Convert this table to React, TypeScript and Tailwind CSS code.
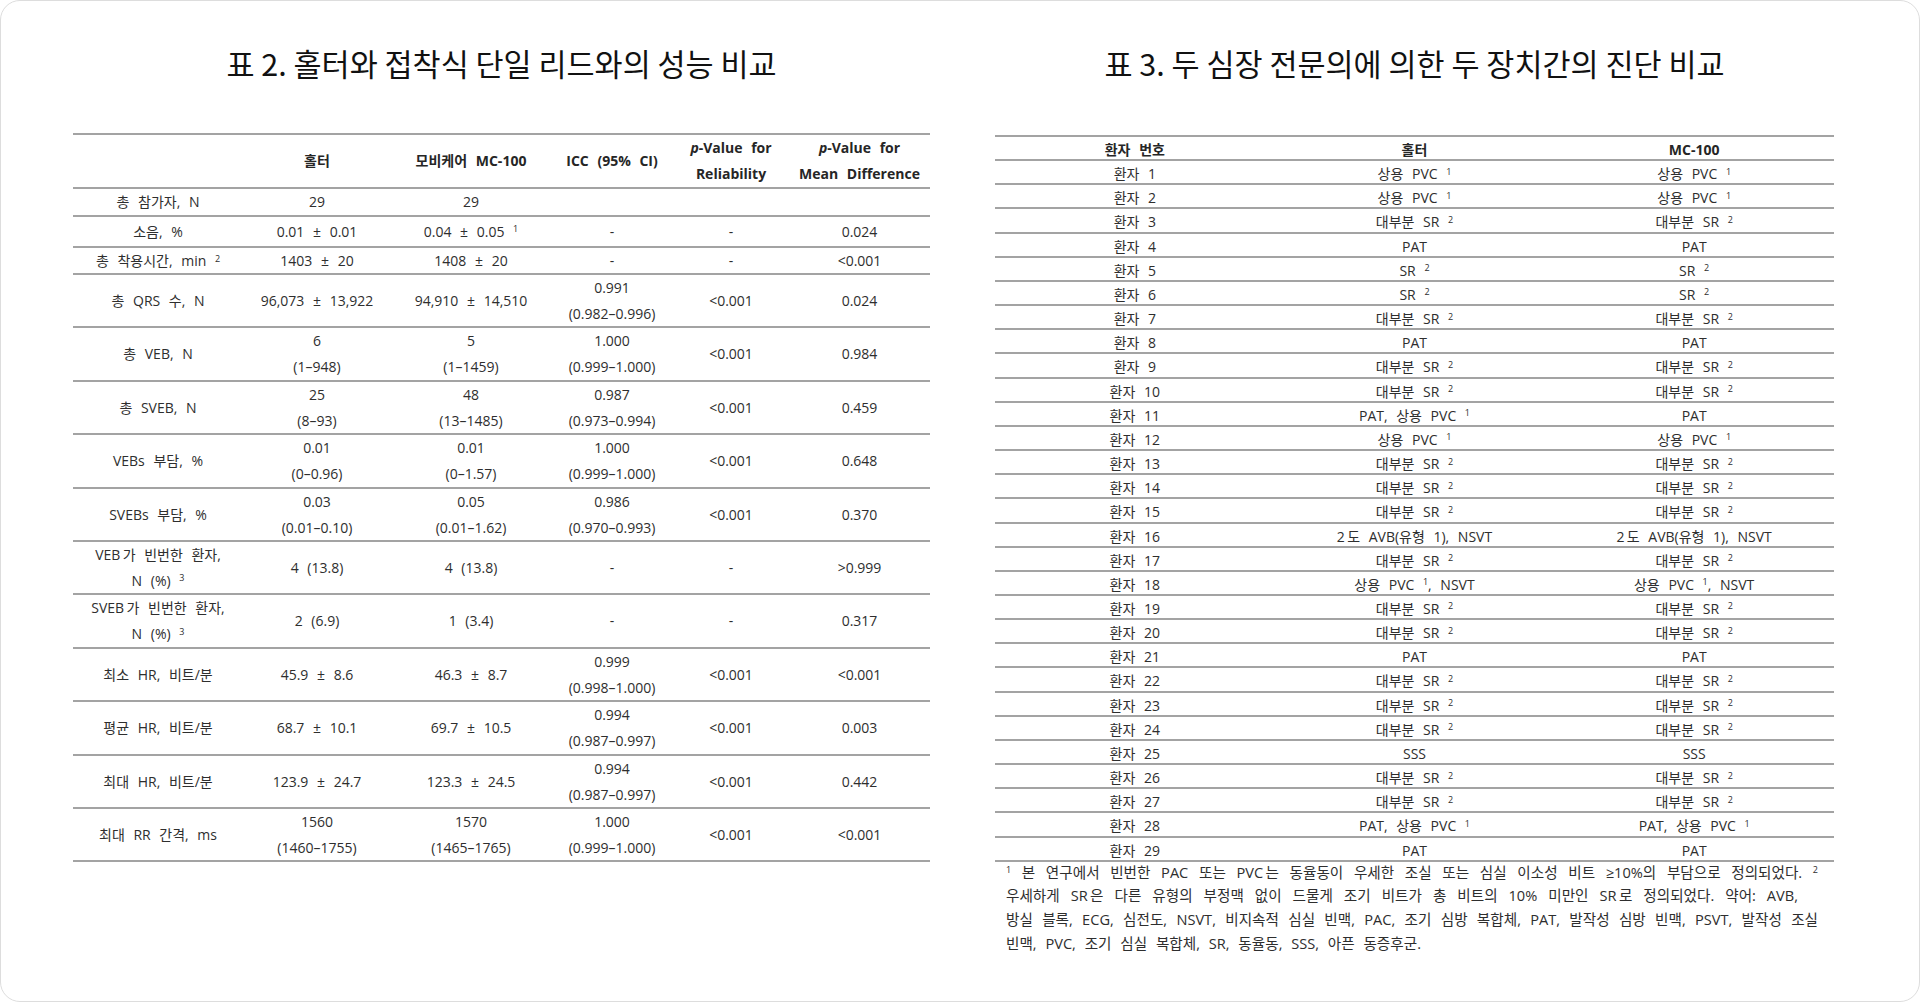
import React from "react";

// rows of table 2: label, holter, mc-100, icc, p reliability, p mean diff
// "|" splits a cell into two lines, "^n" renders a superscript
const table2: string[][] = [
  ["총 참가자, N", "29", "29", "", "", ""],
  ["소음, %", "0.01 ± 0.01", "0.04 ± 0.05 ^1", "-", "-", "0.024"],
  ["총 착용시간, min ^2", "1403 ± 20", "1408 ± 20", "-", "-", "<0.001"],
  ["총 QRS 수, N", "96,073 ± 13,922", "94,910 ± 14,510", "0.991|(0.982–0.996)", "<0.001", "0.024"],
  ["총 VEB, N", "6|(1–948)", "5|(1–1459)", "1.000|(0.999–1.000)", "<0.001", "0.984"],
  ["총 SVEB, N", "25|(8–93)", "48|(13–1485)", "0.987|(0.973–0.994)", "<0.001", "0.459"],
  ["VEBs 부담, %", "0.01|(0–0.96)", "0.01|(0–1.57)", "1.000|(0.999–1.000)", "<0.001", "0.648"],
  ["SVEBs 부담, %", "0.03|(0.01–0.10)", "0.05|(0.01–1.62)", "0.986|(0.970–0.993)", "<0.001", "0.370"],
  ["VEB\u2009가 빈번한 환자,|N (%) ^3", "4 (13.8)", "4 (13.8)", "-", "-", ">0.999"],
  ["SVEB\u2009가 빈번한 환자,|N (%) ^3", "2 (6.9)", "1 (3.4)", "-", "-", "0.317"],
  ["최소 HR, 비트/분", "45.9 ± 8.6", "46.3 ± 8.7", "0.999|(0.998–1.000)", "<0.001", "<0.001"],
  ["평균 HR, 비트/분", "68.7 ± 10.1", "69.7 ± 10.5", "0.994|(0.987–0.997)", "<0.001", "0.003"],
  ["최대 HR, 비트/분", "123.9 ± 24.7", "123.3 ± 24.5", "0.994|(0.987–0.997)", "<0.001", "0.442"],
  ["최대 RR 간격, ms", "1560|(1460–1755)", "1570|(1465–1765)", "1.000|(0.999–1.000)", "<0.001", "<0.001"],
];

const srMost = "대부분 SR ^2";
const pvc = "상용 PVC ^1";

const table3: [string, string][] = [
  [pvc, pvc],
  [pvc, pvc],
  [srMost, srMost],
  ["PAT", "PAT"],
  ["SR ^2", "SR ^2"],
  ["SR ^2", "SR ^2"],
  [srMost, srMost],
  ["PAT", "PAT"],
  [srMost, srMost],
  [srMost, srMost],
  ["PAT, 상용 PVC ^1", "PAT"],
  [pvc, pvc],
  [srMost, srMost],
  [srMost, srMost],
  [srMost, srMost],
  ["2\u2009도 AVB(유형 1), NSVT", "2\u2009도 AVB(유형 1), NSVT"],
  [srMost, srMost],
  ["상용 PVC ^1, NSVT", "상용 PVC ^1, NSVT"],
  [srMost, srMost],
  [srMost, srMost],
  ["PAT", "PAT"],
  [srMost, srMost],
  [srMost, srMost],
  [srMost, srMost],
  ["SSS", "SSS"],
  [srMost, srMost],
  [srMost, srMost],
  ["PAT, 상용 PVC ^1", "PAT, 상용 PVC ^1"],
  ["PAT", "PAT"],
];

function Txt({ s }: { s: string }) {
  const parts = s.split(/(\^\d)/);
  return (
    <>
      {parts.map((p, i) =>
        p.startsWith("^") ? (
          <sup key={i} className="text-[9px]">
            {p.slice(1)}
          </sup>
        ) : (
          <React.Fragment key={i}>{p}</React.Fragment>
        )
      )}
    </>
  );
}

function Cell({ s }: { s: string }) {
  return (
    <div className="flex flex-col items-center justify-center text-center leading-[26px] whitespace-nowrap">
      {s.split("|").map((line, i) => (
        <div key={i}>
          <Txt s={line} />
        </div>
      ))}
    </div>
  );
}

function PValue({ second }: { second: string }) {
  return (
    <div className="flex flex-col items-center justify-center text-center leading-[26px] whitespace-nowrap">
      <div>
        <i>p</i>-Value for
      </div>
      <div>{second}</div>
    </div>
  );
}

const cols2 = "grid grid-cols-[170px_148px_160px_122px_116px_141px]";
const rule = "border-b-2 border-[#a3a3a3]";

function Table2() {
  const heights = ["h-[28px]", "h-[31px]", "h-[27px]"];
  return (
    <div className="mt-[50px] border-t-2 border-[#a3a3a3]">
      <div className={`${cols2} ${rule} h-[54px] font-bold text-[#262626]`}>
        <div />
        <Cell s="홀터" />
        <Cell s="모비케어 MC-100" />
        <Cell s="ICC (95% CI)" />
        <PValue second="Reliability" />
        <PValue second="Mean Difference" />
      </div>
      {table2.map((row, i) => (
        <div key={i} className={`${cols2} ${rule} ${heights[i] ?? "h-[53.4px]"}`}>
          {row.map((c, j) => (
            <Cell key={j} s={c} />
          ))}
        </div>
      ))}
    </div>
  );
}

function Table3() {
  return (
    <div className="mt-[52px] border-t-2 border-[#a3a3a3]">
      <div className={`grid grid-cols-3 ${rule} h-[24.17px] font-bold text-[#262626]`}>
        <Cell s="환자 번호" />
        <Cell s="홀터" />
        <Cell s="MC-100" />
      </div>
      {table3.map(([a, b], i) => (
        <div key={i} className={`grid grid-cols-3 ${rule} h-[24.17px]`}>
          <Cell s={`환자 ${i + 1}`} />
          <Cell s={a} />
          <Cell s={b} />
        </div>
      ))}
    </div>
  );
}

const note1 = "^1 본 연구에서 빈번한 PAC 또는 PVC\u2009는 동율동이 우세한 조실 또는 심실 이소성 비트 ≥10%의 부담으로 정의되었다. ^2";
const note2 = "우세하게 SR\u2009은 다른 유형의 부정맥 없이 드물게 조기 비트가 총 비트의 10% 미만인 SR\u2009로 정의되었다. 약어: AVB,";
const note3 = "방실 블록, ECG, 심전도, NSVT, 비지속적 심실 빈맥, PAC, 조기 심방 복합체, PAT, 발작성 심방 빈맥, PSVT, 발작성 조실";
const note4 = "빈맥, PVC, 조기 심실 복합체, SR, 동율동, SSS, 아픈 동증후군.";

function Footnote() {
  const line = "whitespace-nowrap text-justify [text-align-last:justify]";
  return (
    <div className="mt-[-1px] pl-[11px] pr-[16px] text-[14.6px] leading-[23.7px] text-[#2e2e2e]">
      <div className={line}>
        <Txt s={note1} />
      </div>
      <div className={`${line} pr-[20px]`}>{note2}</div>
      <div className={line}>{note3}</div>
      <div className="whitespace-nowrap">{note4}</div>
    </div>
  );
}

export default function App() {
  return (
    <div className="h-[1002px] w-[1920px] bg-white">
      <div className="flex h-full w-full rounded-[20px] border border-[#dddddd] font-['Open_Sans','Noto_Sans_CJK_KR',sans-serif] text-[14px] text-[#2e2e2e] [word-spacing:5px]">
        <section className="ml-[72px] w-[857px]">
          <h2 className="mt-[42px] text-center font-['Noto_Sans_CJK_KR',sans-serif] text-[30.5px] font-normal leading-[40px] text-[#111111] [word-spacing:0px]">
            표 2. 홀터와 접착식 단일 리드와의 성능 비교
          </h2>
          <Table2 />
        </section>
        <section className="ml-[65px] w-[839px]">
          <h2 className="mt-[42px] text-center font-['Noto_Sans_CJK_KR',sans-serif] text-[30.5px] font-normal leading-[40px] text-[#111111] [word-spacing:0px]">
            표 3. 두 심장 전문의에 의한 두 장치간의 진단 비교
          </h2>
          <Table3 />
          <Footnote />
        </section>
      </div>
    </div>
  );
}
